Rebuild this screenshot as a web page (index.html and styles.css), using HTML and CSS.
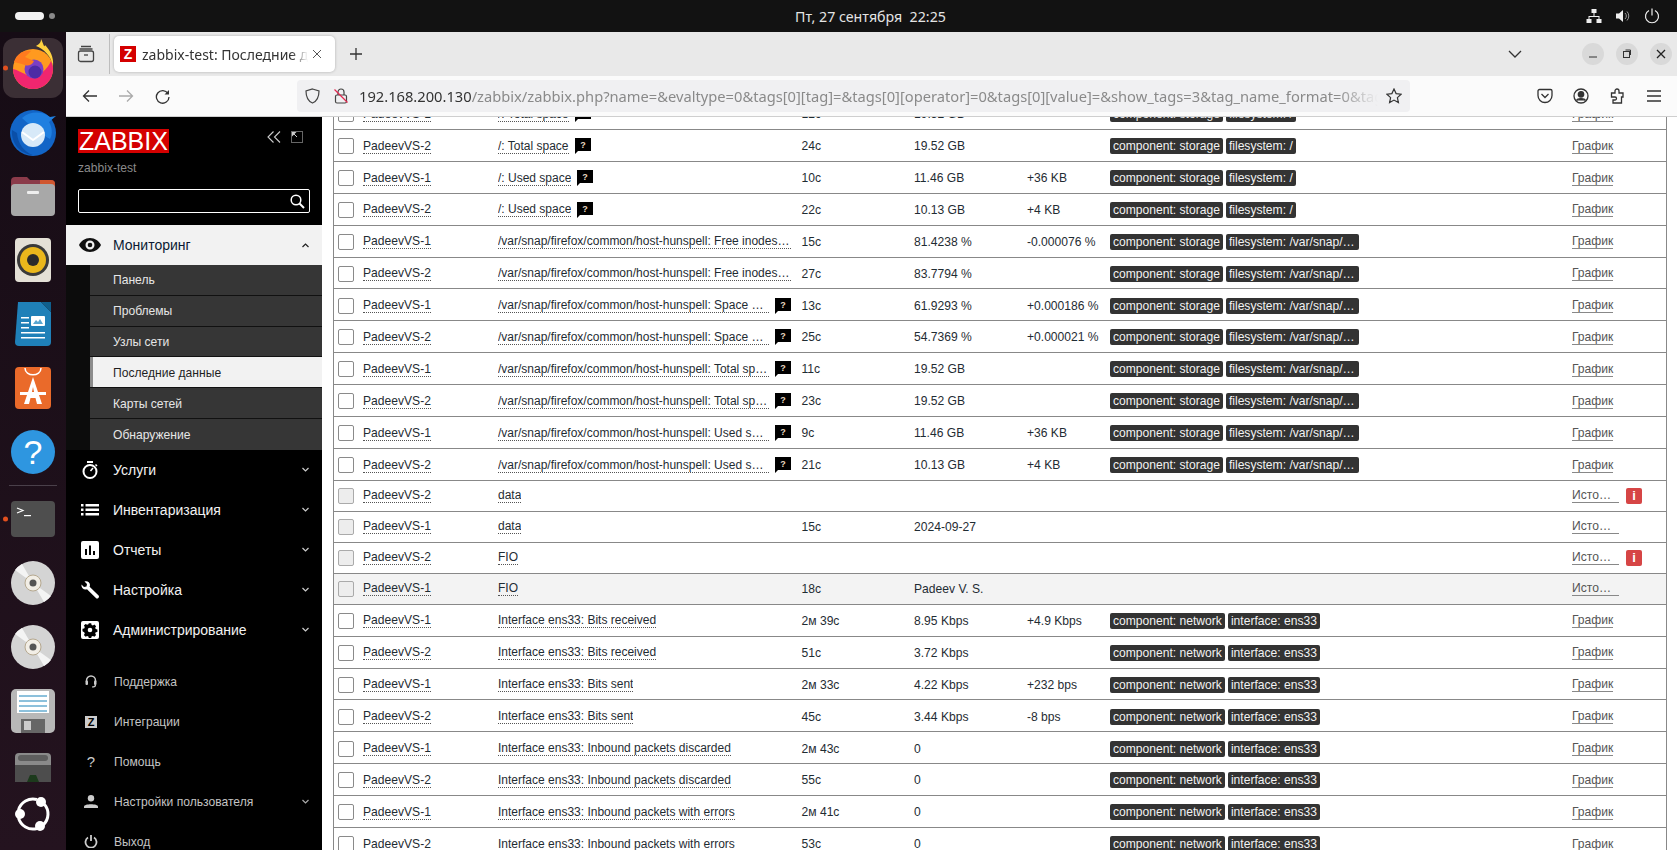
FILE: index.html
```html
<!DOCTYPE html>
<html lang="ru">
<head>
<meta charset="utf-8">
<title>zabbix-test: Последние данные</title>
<link rel="stylesheet" href="styles.css">
</head>
<body>
<header class="topbar">
  <div class="activities"><span class="pill"></span><span class="dot"></span></div>
  <div class="clock">Пт, 27 сентября&nbsp; 22:25</div>
  <div class="tray">
    <svg width="16" height="16" viewBox="0 0 16 16" fill="#eee"><rect x="5.5" y="1" width="5" height="4"/><rect x="0.5" y="11" width="5" height="4"/><rect x="10.5" y="11" width="5" height="4"/><path d="M7.5 5h1v3h5v3h-1V9H3.500v2h-1V8h5z"/></svg>
    <svg width="16" height="16" viewBox="0 0 16 16" fill="#eee"><path d="M1 5.500h3L8 2v12l-4-3.500H1z"/><path d="M10 5a4 4 0 0 1 0 6M12 3.500a6.500 6.500 0 0 1 0 9" fill="none" stroke="#999" stroke-width="1"/></svg>
    <svg width="16" height="16" viewBox="0 0 16 16" fill="none" stroke="#eee" stroke-width="1.200"><path d="M5 2.500a6.500 6.500 0 1 0 6 0M8 0.500v7"/></svg>
  </div>
</header>
<div class="desk">
  <aside class="dock">
    <svg class="dock-art" width="66" height="818" viewBox="0 32 66 818">
      <rect x="3" y="38" width="60" height="60" rx="12" fill="#3b2f35"/>
      <circle cx="5.500" cy="68" r="2.500" fill="#e2501f"/>
      <circle cx="33" cy="69" r="20" fill="#ff9a1f"/>
      <path d="M13 69a20 20 0 0 0 40 0c0-3-1-6-2-8-4 10-14 17-24 14-5-2-9-5-14-6z" fill="#f0266f"/>
      <path d="M36 46c8 3 15 10 17 20 1-9-3-16-8-21-1 3-1 0-4-6 0 4-2 5-5 7z" fill="#ffd23f"/>
      <circle cx="34" cy="69" r="9.500" fill="#7b3fc4"/>
      <circle cx="35" cy="72" r="6.500" fill="#4b2ba5"/>
      <path d="M14 62c3-9 10-12 17-11l-6 6 9 4c-3 6-8 5-12 3z" fill="#ff7a1f"/>
      <circle cx="33" cy="133" r="23" fill="#1265c7"/>
      <path d="M22 118c8-7 20-7 28-1l6-1-7 6c3 5 4 12 1 17-7-4-16-10-28-21z" fill="#1f7fe0"/>
      <path d="M12 130c-1 12 7 24 21 25-9-3-15-11-16-22z" fill="#0a4fa8"/>
      <circle cx="33" cy="135" r="12" fill="#d7e9f8"/>
      <path d="M22 132l11 8 11-8" fill="none" stroke="#fff" stroke-width="2"/>
      <path d="M11 181a4 4 0 0 1 4-4h12l3 3h21a4 4 0 0 1 4 4v8H11z" fill="#8b3b4a"/>
      <path d="M40 180h11a4 4 0 0 1 4 4v6H40z" fill="#d0562f"/>
      <rect x="11" y="184" width="44" height="32" rx="4" fill="#a8a8a8"/>
      <rect x="27" y="191" width="12" height="3" rx="1" fill="#eee"/>
      <rect x="15" y="238" width="36" height="44" rx="4" fill="#e4e0d6"/>
      <circle cx="33" cy="260" r="16" fill="#3a3a3a"/>
      <circle cx="33" cy="260" r="13" fill="#eab71c"/>
      <circle cx="33" cy="260" r="6" fill="#2b2b2b"/>
      <path d="M18 302h23l10 10v30a4 4 0 0 1-4 4H19a4 4 0 0 1-4-4z" fill="#1f80b8"/>
      <path d="M41 302h10v10z" fill="#0f5f8d"/>
      <rect x="21" y="317" width="8" height="1.500" fill="#fff"/><rect x="21" y="322" width="8" height="1.500" fill="#fff"/><rect x="21" y="327" width="8" height="1.500" fill="#fff"/>
      <rect x="21" y="332" width="24" height="1.500" fill="#fff"/><rect x="21" y="337" width="24" height="1.500" fill="#fff"/>
      <rect x="31" y="316" width="14" height="10" rx="1" fill="#fff"/><path d="M33 324l3-4 2 2 2-3 3 5z" fill="#5aa6d0"/>
      <path d="M15 371a4 4 0 0 1 4-4h28a4 4 0 0 1 4 4v34a4 4 0 0 1-4 4H19a4 4 0 0 1-4-4z" fill="#ea6a2a"/>
      <path d="M25 368c0 9 16 9 16 0" fill="none" stroke="#fff" stroke-width="1.500"/>
      <path d="M33 377l-9 27h5l1.500-6h5l1.500 6h5zM31.500 394l1.500-7 1.500 7z" fill="#fff"/>
      <rect x="20" y="392" width="26" height="3" fill="#fff"/>
      <circle cx="33" cy="452" r="22" fill="#2e96e0"/>
      <text class="dock-q" x="33" y="464" text-anchor="middle">?</text>
      <rect x="9" y="485" width="48" height="1" fill="#4a404a"/>
      <circle cx="5.500" cy="519" r="2.500" fill="#e2501f"/>
      <rect x="11" y="501" width="44" height="36" rx="4" fill="#4e4e4e"/>
      <path d="M17 508l6 2.500-6 2.500" fill="none" stroke="#fff" stroke-width="1.200"/><rect x="24" y="515" width="7" height="1.200" fill="#fff"/>
      <g><circle cx="33" cy="583" r="22" fill="#d4d4d4"/><path d="M33 583L15 570a22 22 0 0 1 7-6zM33 583l18 13a22 22 0 0 1-7 6z" fill="#f4f4f4"/><circle cx="33" cy="583" r="8" fill="#f2eee6" stroke="#b5a88f"/><circle cx="33" cy="583" r="3.500" fill="#555"/></g>
      <g><circle cx="33" cy="647" r="22" fill="#d4d4d4"/><path d="M33 647L15 634a22 22 0 0 1 7-6zM33 647l18 13a22 22 0 0 1-7 6z" fill="#f4f4f4"/><circle cx="33" cy="647" r="8" fill="#f2eee6" stroke="#b5a88f"/><circle cx="33" cy="647" r="3.500" fill="#555"/></g>
      <rect x="11" y="689" width="44" height="44" rx="5" fill="#b8b8b8"/>
      <rect x="17" y="691" width="32" height="22" fill="#fff"/>
      <path d="M19 696h28M19 701h28M19 706h28M19 711h28" stroke="#1a82b8" stroke-width="1"/>
      <rect x="21" y="719" width="24" height="14" fill="#666"/><rect x="24" y="721" width="7" height="9" fill="#ccc"/>
      <path d="M15 757a4 4 0 0 1 4-4h28a4 4 0 0 1 4 4v25H15z" fill="#8a8a8a"/>
      <rect x="18" y="755" width="30" height="6" rx="3" fill="#5e5e5e"/>
      <path d="M15 765h36v17H15z" fill="#4d4d4d"/><path d="M27 782l3-7h6l3 7z" fill="#1c3a1c"/>
      <path d="M44.500 804.400A15 15 0 0 1 43.600 824.600M36.900 828.500A15 15 0 0 1 18.500 817.900M18.500 810.100A15 15 0 0 1 36.900 799.500" fill="none" stroke="#fff" stroke-width="3"/>
      <circle cx="41" cy="802" r="5" fill="#fff"/><circle cx="20" cy="814" r="5" fill="#fff"/><circle cx="40" cy="826" r="5" fill="#fff"/>
    </svg>
  </aside>
  <div class="browser">
    <div class="tabstrip">
      <svg class="view-icon" width="18" height="18" viewBox="0 0 18 18" fill="none" stroke="#444" stroke-width="1.300"><path d="M4 1.500h10M2.500 4h13"/><rect x="1.500" y="6" width="15" height="10.500" rx="2"/><path d="M7 10h4"/></svg>
      <span class="tab-sep"></span>
      <div class="tab">
        <span class="favicon">Z</span>
        <span class="tab-title">zabbix-test: Последние данные</span>
        <svg width="12" height="12" viewBox="0 0 12 12" stroke="#555" stroke-width="1"><path d="M2 2l8 8M10 2l-8 8"/></svg>
      </div>
      <svg class="plus" width="14" height="14" viewBox="0 0 14 14" stroke="#333" stroke-width="1.300"><path d="M7 1v12M1 7h12"/></svg>
      <svg class="tab-list" width="14" height="8" viewBox="0 0 14 8" fill="none" stroke="#333" stroke-width="1.300"><path d="M1 1l6 6 6-6"/></svg>
      <div class="winctl">
        <span class="winbtn"><svg width="10" height="10" viewBox="0 0 10 10" stroke="#333"><path d="M1 8h8"/></svg></span>
        <span class="winbtn"><svg width="10" height="10" viewBox="0 0 10 10" stroke="#333" fill="none"><rect x="1.500" y="2.500" width="6" height="6"/><path d="M3.500 1h5v5"/></svg></span>
        <span class="winbtn"><svg width="10" height="10" viewBox="0 0 10 10" stroke="#222" stroke-width="1.300"><path d="M1 1l8 8M9 1l-8 8"/></svg></span>
      </div>
    </div>
    <nav class="navbar">
      <svg class="nav-back" width="16" height="14" viewBox="0 0 16 14" fill="none" stroke="#333" stroke-width="1.300"><path d="M15 7H1.500M7 1.500L1.500 7 7 12.500"/></svg>
      <svg class="nav-fwd" width="16" height="14" viewBox="0 0 16 14" fill="none" stroke="#aaa" stroke-width="1.300"><path d="M1 7h13.500M9 1.500L14.500 7 9 12.500"/></svg>
      <svg class="nav-reload" width="15" height="15" viewBox="0 0 15 15" fill="none" stroke="#333" stroke-width="1.300"><path d="M13 4.500A6.300 6.300 0 1 0 14 8"/><path d="M9.500 5.500H14V1z" fill="#333" stroke="none"/></svg>
      <div class="urlbar">
        <svg class="url-shield" width="15" height="16" viewBox="0 0 15 16" fill="none" stroke="#444" stroke-width="1.200"><path d="M7.500 1L14 3c0 6-1.500 10-6.500 12C2.500 13 1 9 1 3z"/></svg>
        <svg class="url-lock" width="14" height="16" viewBox="0 0 14 16" fill="none" stroke="#444" stroke-width="1.200"><rect x="1.500" y="7" width="11" height="8" rx="1.500"/><path d="M4 7V4a3 3 0 0 1 6 0v3"/><path d="M0.500 1.500l13 13" stroke="#e22850"/></svg>
        <span class="url-text"><b>192.168.200.130</b>/zabbix/zabbix.php?name=&amp;evaltype=0&amp;tags[0][tag]=&amp;tags[0][operator]=0&amp;tags[0][value]=&amp;show_tags=3&amp;tag_name_format=0&amp;tag_name_format=0</span>
        <svg class="url-star" width="16" height="16" viewBox="0 0 16 16" fill="none" stroke="#333" stroke-width="1.200"><path d="M8 1l2.100 4.600 5 .6-3.700 3.400 1 5L8 12.100 3.600 14.600l1-5L.9 6.200l5-.6z"/></svg>
      </div>
      <svg class="tool tool-first" width="16" height="16" viewBox="0 0 16 16" fill="none" stroke="#333" stroke-width="1.300"><path d="M1 3a1.500 1.500 0 0 1 1.500-1.500h11A1.500 1.500 0 0 1 15 3v4.500a7 7 0 0 1-14 0z"/><path d="M4.500 6L8 9.500 11.500 6"/></svg>
      <svg class="tool" width="16" height="16" viewBox="0 0 16 16" fill="none" stroke="#333" stroke-width="1.300"><circle cx="8" cy="8" r="7"/><circle cx="8" cy="6.300" r="2.700" fill="#333"/><path d="M3.500 12.500c1-2.500 8-2.500 9 0" fill="#333"/></svg>
      <svg class="tool" width="16" height="16" viewBox="0 0 16 16" fill="none" stroke="#333" stroke-width="1.300"><path d="M1.500 5h3.500V3a2 2 0 0 1 4 0v2h4v4h-1.500v6H3v-3h2a1.500 1.500 0 0 0 0-3H1.500z"/></svg>
      <svg class="tool" width="16" height="14" viewBox="0 0 16 14" stroke="#333" stroke-width="1.300"><path d="M1 2h14M1 7h14M1 12h14"/></svg>
    </nav>
    <div class="main">
      <aside class="side">
        <div class="side-head">
          <div class="logo-row">
            <span class="logo">ZABBIX</span>
            <div class="side-ctl">
              <svg width="14" height="12" viewBox="0 0 14 12" fill="none" stroke="#ccc" stroke-width="1.100"><path d="M6.500 0.500L1 6l5.500 5.500M13 0.500L7.500 6l5.500 5.500"/></svg>
              <svg width="12" height="12" viewBox="0 0 12 12" fill="none" stroke="#ccc"><rect x="0.500" y="0.500" width="11" height="11" stroke-dasharray="1 1"/><path d="M1 1h4.500L1 5.500z" fill="#ccc" stroke="none"/><path d="M2 2l4 4" /></svg>
            </div>
          </div>
          <div class="server">zabbix-test</div>
          <div class="search">
            <svg width="15" height="15" viewBox="0 0 15 15" fill="none" stroke="#fff" stroke-width="1.500"><circle cx="6" cy="6" r="4.800"/><path d="M9.500 9.500l4.500 4.500" stroke-width="2"/></svg>
          </div>
        </div>
        <div class="menu">
          <div class="mi mi-on">
            <svg class="mi-eye" width="22" height="14" viewBox="0 0 22 14"><path d="M11 0C6 0 2 3 0 7c2 4 6 7 11 7s9-3 11-7c-2-4-6-7-11-7zm0 11.500A4.500 4.500 0 1 1 11 2.500a4.500 4.500 0 0 1 0 9z" fill="#111"/><circle cx="11" cy="7" r="2.300" fill="#111"/></svg>
            <span>Мониторинг</span>
            <svg class="chev" width="7" height="5" viewBox="0 0 7 5" fill="none" stroke="#222" stroke-width="1.200"><path d="M0.500 4l3-3 3 3"/></svg>
          </div>
          <div class="submenu">
            <a class="si">Панель</a>
            <a class="si">Проблемы</a>
            <a class="si">Узлы сети</a>
            <a class="si si-on">Последние данные</a>
            <a class="si">Карты сетей</a>
            <a class="si si-last">Обнаружение</a>
          </div>
          <div class="mi">
            <svg class="mi-ic" width="18" height="18" viewBox="0 0 18 18" fill="none" stroke="#fff" stroke-width="2"><circle cx="9" cy="10.500" r="6.500"/><path d="M6 1h6" /><path d="M9.500 10l2.500-3" stroke-width="1.500"/><path d="M14.500 3.500l1.500 1.500" stroke-width="1.500"/></svg>
            <span>Услуги</span>
            <svg class="chev" width="7" height="5" viewBox="0 0 7 5" fill="none" stroke="#ccc" stroke-width="1.200"><path d="M0.500 1l3 3 3-3"/></svg>
          </div>
          <div class="mi">
            <svg class="mi-ic" width="18" height="12" viewBox="0 0 18 12" fill="#fff"><rect y="0" width="2.500" height="2.500"/><rect y="4.500" width="2.500" height="2.500"/><rect y="9" width="2.500" height="2.500"/><rect x="4.500" y="0" width="13.500" height="2.500"/><rect x="4.500" y="4.500" width="13.500" height="2.500"/><rect x="4.500" y="9" width="13.500" height="2.500"/></svg>
            <span>Инвентаризация</span>
            <svg class="chev" width="7" height="5" viewBox="0 0 7 5" fill="none" stroke="#ccc" stroke-width="1.200"><path d="M0.500 1l3 3 3-3"/></svg>
          </div>
          <div class="mi">
            <svg class="mi-ic" width="18" height="18" viewBox="0 0 18 18"><rect width="18" height="18" rx="2" fill="#fff"/><path d="M4 8h2v6H4zM8 4.500h2V14H8zM12 10h2v4h-2z" fill="#000"/></svg>
            <span>Отчеты</span>
            <svg class="chev" width="7" height="5" viewBox="0 0 7 5" fill="none" stroke="#ccc" stroke-width="1.200"><path d="M0.500 1l3 3 3-3"/></svg>
          </div>
          <div class="mi">
            <svg class="mi-ic" width="18" height="18" viewBox="0 0 18 18" fill="#fff"><path d="M0.500 3.500L3 6l2.500-.5L6 3 3.500 0.500C6-.5 9 1 9 4c0 .8-.2 1.300-.4 1.800l9 8.700c.6.700.5 1.700-.2 2.500-.8.800-1.900.8-2.500.1L6 8.200C3 9.500 0 7 .5 3.500z"/></svg>
            <span>Настройка</span>
            <svg class="chev" width="7" height="5" viewBox="0 0 7 5" fill="none" stroke="#ccc" stroke-width="1.200"><path d="M0.500 1l3 3 3-3"/></svg>
          </div>
          <div class="mi">
            <svg class="mi-ic" width="18" height="18" viewBox="0 0 18 18"><rect width="18" height="18" rx="2" fill="#fff"/><path d="M7.800 3h2.400l.4 1.700 1.300.6 1.500-.9 1.700 1.700-.9 1.500.5 1.300 1.700.4v2.400l-1.700.4-.5 1.300.9 1.500-1.700 1.700-1.500-.9-1.300.5-.4 1.700H7.800l-.4-1.700-1.300-.5-1.500.9-1.700-1.700.9-1.500-.6-1.300L1.500 11V8.600l1.700-.4.6-1.300-.9-1.500 1.700-1.700 1.500.9 1.300-.6z" transform="translate(0 -.8)" fill="#000"/><circle cx="9" cy="9" r="2.300" fill="#fff"/></svg>
            <span>Администрирование</span>
            <svg class="chev" width="7" height="5" viewBox="0 0 7 5" fill="none" stroke="#ccc" stroke-width="1.200"><path d="M0.500 1l3 3 3-3"/></svg>
          </div>
        </div>
        <div class="user-menu">
          <div class="ui">
            <svg class="ui-ic" width="14" height="13" viewBox="0 0 14 13" fill="#ccc"><path d="M2.500 6.500V5.500a4.500 4.500 0 0 1 9 0v1" fill="none" stroke="#ccc" stroke-width="1.500"/><rect x="1.500" y="5.500" width="2.500" height="4.500" rx="1"/><rect x="10" y="5.500" width="2.500" height="4.500" rx="1"/><path d="M11.500 10c0 1.500-1.500 2-3.500 2" fill="none" stroke="#ccc" stroke-width="1.200"/></svg>
            <span>Поддержка</span>
          </div>
          <div class="ui">
            <span class="z-ic">Z</span>
            <span>Интеграции</span>
          </div>
          <div class="ui">
            <span class="q-ic">?</span>
            <span>Помощь</span>
          </div>
          <div class="ui">
            <svg class="ui-ic" width="14" height="13" viewBox="0 0 14 13" fill="#ccc"><circle cx="7" cy="3.200" r="3.200"/><path d="M0 13v-1.500C0 8.500 14 8.500 14 11.500V13z"/></svg>
            <span>Настройки пользователя</span>
            <svg class="chev" width="7" height="5" viewBox="0 0 7 5" fill="none" stroke="#aaa" stroke-width="1.200"><path d="M0.500 1l3 3 3-3"/></svg>
          </div>
          <div class="ui">
            <svg class="ui-ic" width="13" height="13" viewBox="0 0 13 13" fill="none" stroke="#ccc" stroke-width="1.800"><path d="M3.500 2.500a5.500 5.500 0 1 0 6 0M6.500 0v6"/></svg>
            <span>Выход</span>
          </div>
        </div>
      </aside>
      <main class="content">
        <div class="table">
          <div class="row"><span class="cb"></span><a class="host">PadeevVS-1</a><div class="name"><a class="nm">/: Total space</a><svg class="help" width="16" height="16" viewBox="0 0 16 16"><path d="M0 0h16v13H3l-3 3z"/><text x="8" y="10" text-anchor="middle">?</text></svg></div><span>12с</span><span>19.52 GB</span><span></span><div class="tags"><span class="tag">component: storage</span><span class="tag">filesystem: /</span></div><a class="act">График</a></div>
          <div class="row"><span class="cb"></span><a class="host">PadeevVS-2</a><div class="name"><a class="nm">/: Total space</a><svg class="help" width="16" height="16" viewBox="0 0 16 16"><path d="M0 0h16v13H3l-3 3z"/><text x="8" y="10" text-anchor="middle">?</text></svg></div><span>24с</span><span>19.52 GB</span><span></span><div class="tags"><span class="tag">component: storage</span><span class="tag">filesystem: /</span></div><a class="act">График</a></div>
          <div class="row"><span class="cb"></span><a class="host">PadeevVS-1</a><div class="name"><a class="nm">/: Used space</a><svg class="help" width="16" height="16" viewBox="0 0 16 16"><path d="M0 0h16v13H3l-3 3z"/><text x="8" y="10" text-anchor="middle">?</text></svg></div><span>10с</span><span>11.46 GB</span><span>+36 KB</span><div class="tags"><span class="tag">component: storage</span><span class="tag">filesystem: /</span></div><a class="act">График</a></div>
          <div class="row"><span class="cb"></span><a class="host">PadeevVS-2</a><div class="name"><a class="nm">/: Used space</a><svg class="help" width="16" height="16" viewBox="0 0 16 16"><path d="M0 0h16v13H3l-3 3z"/><text x="8" y="10" text-anchor="middle">?</text></svg></div><span>22с</span><span>10.13 GB</span><span>+4 KB</span><div class="tags"><span class="tag">component: storage</span><span class="tag">filesystem: /</span></div><a class="act">График</a></div>
          <div class="row"><span class="cb"></span><a class="host">PadeevVS-1</a><div class="name"><a class="nm">/var/snap/firefox/common/host-hunspell: Free inodes in %</a></div><span>15с</span><span>81.4238 %</span><span>-0.000076 %</span><div class="tags"><span class="tag">component: storage</span><span class="tag tag-long">filesystem: /var/snap/firefox/common/host-hunspell</span></div><a class="act">График</a></div>
          <div class="row"><span class="cb"></span><a class="host">PadeevVS-2</a><div class="name"><a class="nm">/var/snap/firefox/common/host-hunspell: Free inodes in %</a></div><span>27с</span><span>83.7794 %</span><span></span><div class="tags"><span class="tag">component: storage</span><span class="tag tag-long">filesystem: /var/snap/firefox/common/host-hunspell</span></div><a class="act">График</a></div>
          <div class="row"><span class="cb"></span><a class="host">PadeevVS-1</a><div class="name"><a class="nm">/var/snap/firefox/common/host-hunspell: Space utilization</a><svg class="help" width="16" height="16" viewBox="0 0 16 16"><path d="M0 0h16v13H3l-3 3z"/><text x="8" y="10" text-anchor="middle">?</text></svg></div><span>13с</span><span>61.9293 %</span><span>+0.000186 %</span><div class="tags"><span class="tag">component: storage</span><span class="tag tag-long">filesystem: /var/snap/firefox/common/host-hunspell</span></div><a class="act">График</a></div>
          <div class="row"><span class="cb"></span><a class="host">PadeevVS-2</a><div class="name"><a class="nm">/var/snap/firefox/common/host-hunspell: Space utilization</a><svg class="help" width="16" height="16" viewBox="0 0 16 16"><path d="M0 0h16v13H3l-3 3z"/><text x="8" y="10" text-anchor="middle">?</text></svg></div><span>25с</span><span>54.7369 %</span><span>+0.000021 %</span><div class="tags"><span class="tag">component: storage</span><span class="tag tag-long">filesystem: /var/snap/firefox/common/host-hunspell</span></div><a class="act">График</a></div>
          <div class="row"><span class="cb"></span><a class="host">PadeevVS-1</a><div class="name"><a class="nm">/var/snap/firefox/common/host-hunspell: Total space</a><svg class="help" width="16" height="16" viewBox="0 0 16 16"><path d="M0 0h16v13H3l-3 3z"/><text x="8" y="10" text-anchor="middle">?</text></svg></div><span>11с</span><span>19.52 GB</span><span></span><div class="tags"><span class="tag">component: storage</span><span class="tag tag-long">filesystem: /var/snap/firefox/common/host-hunspell</span></div><a class="act">График</a></div>
          <div class="row"><span class="cb"></span><a class="host">PadeevVS-2</a><div class="name"><a class="nm">/var/snap/firefox/common/host-hunspell: Total space</a><svg class="help" width="16" height="16" viewBox="0 0 16 16"><path d="M0 0h16v13H3l-3 3z"/><text x="8" y="10" text-anchor="middle">?</text></svg></div><span>23с</span><span>19.52 GB</span><span></span><div class="tags"><span class="tag">component: storage</span><span class="tag tag-long">filesystem: /var/snap/firefox/common/host-hunspell</span></div><a class="act">График</a></div>
          <div class="row"><span class="cb"></span><a class="host">PadeevVS-1</a><div class="name"><a class="nm">/var/snap/firefox/common/host-hunspell: Used space</a><svg class="help" width="16" height="16" viewBox="0 0 16 16"><path d="M0 0h16v13H3l-3 3z"/><text x="8" y="10" text-anchor="middle">?</text></svg></div><span>9с</span><span>11.46 GB</span><span>+36 KB</span><div class="tags"><span class="tag">component: storage</span><span class="tag tag-long">filesystem: /var/snap/firefox/common/host-hunspell</span></div><a class="act">График</a></div>
          <div class="row"><span class="cb"></span><a class="host">PadeevVS-2</a><div class="name"><a class="nm">/var/snap/firefox/common/host-hunspell: Used space</a><svg class="help" width="16" height="16" viewBox="0 0 16 16"><path d="M0 0h16v13H3l-3 3z"/><text x="8" y="10" text-anchor="middle">?</text></svg></div><span>21с</span><span>10.13 GB</span><span>+4 KB</span><div class="tags"><span class="tag">component: storage</span><span class="tag tag-long">filesystem: /var/snap/firefox/common/host-hunspell</span></div><a class="act">График</a></div>
          <div class="row row-text"><span class="cb cb-off"></span><a class="host">PadeevVS-2</a><div class="name"><a class="nm">data</a></div><span></span><span></span><span></span><div class="tags"></div><a class="act act-hist">История</a><span class="info">i</span></div>
          <div class="row row-text"><span class="cb cb-off"></span><a class="host">PadeevVS-1</a><div class="name"><a class="nm">data</a></div><span>15с</span><span>2024-09-27</span><span></span><div class="tags"></div><a class="act act-hist">История</a></div>
          <div class="row row-text"><span class="cb cb-off"></span><a class="host">PadeevVS-2</a><div class="name"><a class="nm">FIO</a></div><span></span><span></span><span></span><div class="tags"></div><a class="act act-hist">История</a><span class="info">i</span></div>
          <div class="row row-text row-hover"><span class="cb cb-off"></span><a class="host">PadeevVS-1</a><div class="name"><a class="nm">FIO</a></div><span>18с</span><span>Padeev V. S.</span><span></span><div class="tags"></div><a class="act act-hist">История</a></div>
          <div class="row"><span class="cb"></span><a class="host">PadeevVS-1</a><div class="name"><a class="nm">Interface ens33: Bits received</a></div><span>2м 39с</span><span>8.95 Kbps</span><span>+4.9 Kbps</span><div class="tags"><span class="tag">component: network</span><span class="tag">interface: ens33</span></div><a class="act">График</a></div>
          <div class="row"><span class="cb"></span><a class="host">PadeevVS-2</a><div class="name"><a class="nm">Interface ens33: Bits received</a></div><span>51с</span><span>3.72 Kbps</span><span></span><div class="tags"><span class="tag">component: network</span><span class="tag">interface: ens33</span></div><a class="act">График</a></div>
          <div class="row"><span class="cb"></span><a class="host">PadeevVS-1</a><div class="name"><a class="nm">Interface ens33: Bits sent</a></div><span>2м 33с</span><span>4.22 Kbps</span><span>+232 bps</span><div class="tags"><span class="tag">component: network</span><span class="tag">interface: ens33</span></div><a class="act">График</a></div>
          <div class="row"><span class="cb"></span><a class="host">PadeevVS-2</a><div class="name"><a class="nm">Interface ens33: Bits sent</a></div><span>45с</span><span>3.44 Kbps</span><span>-8 bps</span><div class="tags"><span class="tag">component: network</span><span class="tag">interface: ens33</span></div><a class="act">График</a></div>
          <div class="row"><span class="cb"></span><a class="host">PadeevVS-1</a><div class="name"><a class="nm">Interface ens33: Inbound packets discarded</a></div><span>2м 43с</span><span>0</span><span></span><div class="tags"><span class="tag">component: network</span><span class="tag">interface: ens33</span></div><a class="act">График</a></div>
          <div class="row"><span class="cb"></span><a class="host">PadeevVS-2</a><div class="name"><a class="nm">Interface ens33: Inbound packets discarded</a></div><span>55с</span><span>0</span><span></span><div class="tags"><span class="tag">component: network</span><span class="tag">interface: ens33</span></div><a class="act">График</a></div>
          <div class="row"><span class="cb"></span><a class="host">PadeevVS-1</a><div class="name"><a class="nm">Interface ens33: Inbound packets with errors</a></div><span>2м 41с</span><span>0</span><span></span><div class="tags"><span class="tag">component: network</span><span class="tag">interface: ens33</span></div><a class="act">График</a></div>
          <div class="row"><span class="cb"></span><a class="host">PadeevVS-2</a><div class="name"><a class="nm">Interface ens33: Inbound packets with errors</a></div><span>53с</span><span>0</span><span></span><div class="tags"><span class="tag">component: network</span><span class="tag">interface: ens33</span></div><a class="act">График</a></div>
        </div>
      </main>
    </div>
  </div>
</div>
</body>
</html>
```
FILE: styles.css
```css
* { box-sizing: border-box; }
html, body { margin: 0; height: 100%; }
body {
  width: 1677px; height: 850px; overflow: hidden;
  display: flex; flex-direction: column;
  font-family: "Liberation Sans", Arial, sans-serif;
  background: #000;
}
svg { display: block; flex: none; }

.topbar {
  height: 32px; flex: none; background: #121212;
  display: flex; align-items: center;
}
.activities { display: flex; align-items: center; gap: 5px; padding-left: 15px; }
.pill { width: 29px; height: 8px; border-radius: 4px; background: #f2f2f2; }
.dot { width: 6px; height: 6px; border-radius: 3px; background: #8a8a8a; }
.clock {
  flex: 1; text-align: center; color: #e4e4e4; font: 14.200px "Noto Sans", sans-serif;
  padding-left: 100px;
}
.tray { display: flex; align-items: center; gap: 13px; padding-right: 17px; }

.desk { flex: 1; display: flex; min-height: 0; }
.dock { width: 66px; flex: none; background: linear-gradient(#160c15, #24131f); overflow: hidden; }
.dock-q { font: 34px "Liberation Sans", sans-serif; fill: #fff; }
.browser { flex: 1; min-width: 0; display: flex; flex-direction: column; background: #fff; }

.tabstrip {
  height: 44px; flex: none; background: #e9e9e9;
  display: flex; align-items: center;
}
.view-icon { margin-left: 11px; }
.tab-sep { width: 1px; height: 40px; background: #bdbdbd; margin-left: 14px; }
.tab {
  margin-left: 4px; width: 221px; height: 36px; background: #fff; border-radius: 5px;
  box-shadow: 0 0 3px rgba(0,0,0,.25);
  display: flex; align-items: center; padding: 0 12px 0 6px;
}
.favicon {
  width: 16px; height: 16px; background: #d40000; color: #fff; flex: none;
  font: bold 14px/16px "Liberation Sans", sans-serif; text-align: center;
}
.tab-title {
  flex: 1; min-width: 0; margin: 0 3px 0 6px; overflow: hidden; white-space: nowrap;
  font: 14px "Noto Sans", sans-serif; color: #333;
  -webkit-mask-image: linear-gradient(to right, #000 90%, transparent);
  mask-image: linear-gradient(to right, #000 90%, transparent);
}
.plus { margin-left: 14px; }
.tab-list { margin-left: 1144.500px; }
.winctl { display: flex; gap: 12px; margin-left: 60px; }
.winbtn {
  width: 22px; height: 22px; border-radius: 11px; background: #d9d9d9;
  display: flex; align-items: center; justify-content: center;
}

.navbar {
  height: 41px; flex: none; background: #fbfbfb; border-bottom: 1px solid #cfcfcf;
  display: flex; align-items: center;
}
.nav-back { margin-left: 16px; }
.nav-fwd { margin-left: 20px; }
.nav-reload { margin-left: 21px; }
.urlbar {
  margin-left: 127px; width: 1113px; height: 32px; border-radius: 4px;
  background: #f0f0f2; display: flex; align-items: center;
}
.url-shield { margin-left: 8px; }
.url-lock { margin-left: 14px; }
.url-text {
  flex: 1; min-width: 0; margin: 0 8px 0 11px; overflow: hidden; white-space: nowrap;
  font: 14.700px "Noto Sans", sans-serif; color: #8a8a8a;
  -webkit-mask-image: linear-gradient(to right, #000 96%, transparent);
  mask-image: linear-gradient(to right, #000 96%, transparent);
}
.url-text b { font-weight: normal; color: #333; }
.url-star { margin-right: 8px; }
.tool { margin-left: 20.400px; }
.tool-first { margin-left: 127px; }

.main { flex: 1; min-height: 0; display: flex; overflow: hidden; }
.side {
  width: 256px; flex: none; background: #000; color: #f2f2f2; overflow: hidden;
}
.side-head { height: 108px; padding: 12px 12px 0; }
.logo-row { display: flex; align-items: center; justify-content: space-between; }
.logo {
  background: #d40000; color: #fff; font-size: 25px; line-height: 24px; padding: 0 1px; height: 24px;
}
.side-ctl { display: flex; align-items: center; gap: 10px; margin-top: -8px; padding-right: 7px; }
.server { color: #8a8a8a; font-size: 12.100px; line-height: 16px; margin-top: 7px; }
.search {
  margin-top: 13px; width: 232px; height: 24px; border: 1px solid #fff; border-radius: 2px;
  display: flex; align-items: center; justify-content: flex-end; padding-right: 4px;
}
.mi {
  height: 40px; display: flex; align-items: center; font-size: 14px; color: #f2f2f2;
  padding-left: 15px;
}
.mi-ic { margin-right: 14px; }
.mi-eye { margin-left: -2px; margin-right: 12px; }
.mi-on { background: #f2f2f2; color: #0b1a33; }
.chev { margin-left: auto; margin-right: 13px; }
.submenu { background: #0c0c0c; padding-left: 24px; }
.si {
  display: flex; align-items: center; height: 30.830px; padding: 1px 0 0 23px; font-size: 12.100px;
  color: #e6e6e6; background: #363636; border-bottom: 1px solid #111;
}
.si-on { background: #f2f2f2; color: #1f1f1f; box-shadow: inset 3px 0 0 #8c8c8c; }
.si-last { border-bottom: 0; }
.user-menu { margin-top: 12px; }
.ui {
  height: 40px; display: flex; align-items: center; font-size: 12.100px; color: #c4c4c4;
  padding-left: 18px;
}
.ui-ic { margin-right: 16px; width: 14px; }
.z-ic {
  width: 12px; height: 12px; margin: 0 17px 0 1px; background: #ccc; color: #000;
  font: bold 11px/12px "Liberation Sans", sans-serif; text-align: center; flex: none;
}
.q-ic { width: 12px; margin: 0 17px 0 1px; flex: none; text-align: center; font-size: 15px; color: #ccc; }

.content { flex: 1; min-width: 0; background: #fff; padding: 0 10px 0 11px; overflow: hidden; }
.table {
  margin-top: -18.900px;
  border-left: 1px solid #888; border-right: 1px solid #888;
  font-size: 12.100px; color: #1f2c33;
}
.row {
  height: 31.900px; padding-top: 1.400px; border-bottom: 1px solid #888;
  display: grid; align-items: center;
  grid-template-columns: 29px 135px 303.500px 112.500px 113px 83px 462px 54px 16px;
}
.row-text { height: 31px; padding-top: 0; }
.row-hover { background: #f3f3f3; }
.cb {
  width: 16px; height: 16px; margin-left: 4px; background: #fff;
  border: 1px solid #8a8a8a; border-radius: 2px;
}
.cb-off { background: #ededed; border-color: #aaa; }
.host, .nm {
  border-bottom: 1px dotted #555; line-height: 14px; justify-self: start; color: #1f2c33;
}
.name { display: flex; align-items: center; gap: 6px; width: 293px; min-width: 0; }
.nm {
  flex: 0 1 auto; min-width: 0; overflow: hidden; white-space: nowrap; text-overflow: ellipsis;
  font-size: 12px;
}
.help { fill: #000; }
.help text { font: bold 9px "Liberation Sans", sans-serif; fill: #e8d8c0; }
.tags { display: flex; gap: 3px; grid-column: 7; }
.tag {
  height: 16px; line-height: 16px; padding: 0 3px; background: #333; color: #f2f2f2;
  border-radius: 2px; white-space: nowrap;
}
.tag-long { max-width: 133px; overflow: hidden; text-overflow: ellipsis; }
.act {
  border-bottom: 1px solid #888; line-height: 14px; color: #555; justify-self: start;
  grid-column: 8;
}
.act-hist { width: 47px; padding-right: 6px; overflow: hidden; white-space: nowrap; text-overflow: ellipsis; }
.info {
  width: 16px; height: 16px; background: #d64545; color: #fff; border-radius: 2px; grid-column: 9;
  font: bold 13px/16px "Liberation Sans", sans-serif; text-align: center;
}
```
